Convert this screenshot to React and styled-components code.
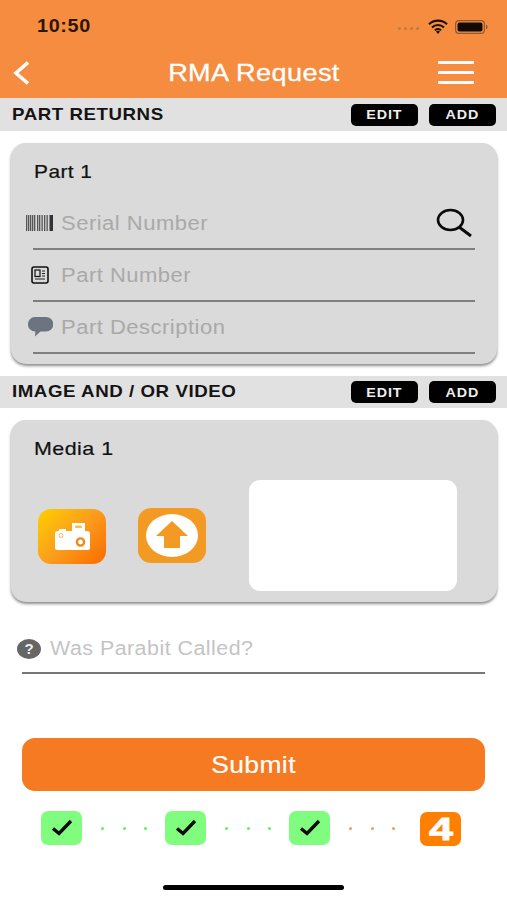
import React from 'react';
import styled, { createGlobalStyle } from 'styled-components';

const GlobalStyle = createGlobalStyle`
	html, body {
		margin: 0;
		padding: 0;
		background: #fff;
	}
	* {
		box-sizing: border-box;
	}
	body {
		font-family: "Liberation Sans", Arial, sans-serif;
	}
`;

const Screen = styled.div`
	width: 507px;
	height: 900px;
	display: flex;
	flex-direction: column;
	background: #fff;
	overflow: hidden;
`;

// the screenshot is stretched sideways, so the type is too
const Wide = styled.span`
	display: inline-block;
	white-space: nowrap;
	transform: scaleX(${props => props.$x || 1.1});
	transform-origin: ${props => props.$origin || 'left'} center;
`;

const Header = styled.header`
	height: 98px;
	background: #f68c40;
	display: flex;
	flex-direction: column;
`;

const StatusBar = styled.div`
	height: 53px;
	display: flex;
	align-items: center;
	justify-content: space-between;
	padding: 0 19px 0 37px;
`;

const Clock = styled.span`
	font-size: 18px;
	font-weight: 700;
	letter-spacing: 0.6px;
	color: #2a1606;
`;

const StatusIcons = styled.div`
	display: flex;
	align-items: center;
	gap: 7px;
`;

const Signal = styled.div`
	display: flex;
	gap: 3px;
	margin: 4px 2px 0 0;
`;

const SignalDot = styled.i`
	width: 3px;
	height: 3px;
	border-radius: 50%;
	background: #c07a3e;
`;

const NavBar = styled.div`
	flex: 1;
	display: grid;
	grid-template-columns: 60px 1fr 60px;
	align-items: center;
	padding: 0 33px 6px 12px;
`;

const Title = styled.h1`
	margin: 0;
	text-align: center;
	font-size: 24px;
	font-weight: 400;
	letter-spacing: 0.35px;
	color: #fff;
	-webkit-text-stroke: 0.3px #fff;
	padding-left: 22px;
`;

const Burger = styled.div`
	justify-self: end;
	width: 36px;
	display: flex;
	flex-direction: column;
	gap: 7px;
`;

const BurgerLine = styled.i`
	height: 3px;
	background: #fff;
	border-radius: 1px;
`;

const SectionBar = styled.div`
	height: ${props => props.$height}px;
	background: #e1e1e1;
	display: flex;
	align-items: center;
	justify-content: space-between;
	padding: 0 11px 0 12px;
`;

const SectionTitle = styled.h2`
	margin: 0;
	font-size: 17px;
	font-weight: 700;
	letter-spacing: 0.5px;
	color: #141414;
`;

const Actions = styled.div`
	display: flex;
	gap: 11px;
`;

const ActionButton = styled.button`
	width: 67px;
	height: 22px;
	padding: 0;
	border: none;
	border-radius: 5px;
	background: #000;
	color: #eee;
	font-family: inherit;
	font-size: 13px;
	font-weight: 700;
	letter-spacing: 0.8px;
`;

const Card = styled.section`
	height: ${props => props.$height}px;
	margin: 12px 10px 12px 11px;
	background: #dadada;
	border-radius: 15px;
	box-shadow: 0 2px 3px rgba(0, 0, 0, 0.45);
	display: flex;
	flex-direction: column;
`;

const CardTitle = styled.h3`
	margin: 0;
	height: ${props => props.$height}px;
	padding: 18px 0 0 23px;
	font-size: 19px;
	line-height: 22px;
	font-weight: 400;
	letter-spacing: 0.4px;
	color: #111;
	-webkit-text-stroke: 0.2px #111;
`;

const FieldRow = styled.div`
	height: 50px;
	display: flex;
	align-items: center;
	padding: 0 24px 0 15px;
`;

const FieldIcon = styled.div`
	width: 28px;
	height: 24px;
	margin-right: 7px;
	flex: none;
	display: flex;
	align-items: center;
	justify-content: center;
`;

const Placeholder = styled.span`
	flex: 1;
	font-size: 20px;
	letter-spacing: 0.45px;
	color: ${props => props.$color || '#a9a9a9'};
`;

const Rule = styled.div`
	height: 2px;
	margin: 0 22px;
	background: #7f7f7f;
`;

const MediaRow = styled.div`
	display: flex;
	align-items: flex-start;
	padding: 15px 0 0 27px;
`;

const MediaButton = styled.div`
	width: 68px;
	height: 55px;
	margin-top: ${props => props.$top}px;
	margin-right: ${props => props.$right}px;
	border-radius: 13px;
	background: ${props => props.$bg};
	display: flex;
	align-items: center;
	justify-content: center;
	flex: none;
`;

const Preview = styled.div`
	width: 208px;
	height: 111px;
	background: #fff;
	border-radius: 11px;
`;

const QuestionRow = styled.div`
	height: 47px;
	margin-top: 11px;
	display: flex;
	align-items: center;
	padding: 0 22px 0 17px;
	gap: 9px;
`;

const QuestionRule = styled.div`
	height: 2px;
	margin: 0 22px;
	background: #777;
`;

const SubmitButton = styled.button`
	height: 53px;
	margin: 64px 22px 0;
	padding: 0;
	border: none;
	border-radius: 13px;
	background: #f57a22;
	color: #fff;
	font-family: inherit;
	font-size: 24px;
	letter-spacing: 0.4px;
	-webkit-text-stroke: 0.2px #fff;
`;

const Steps = styled.div`
	display: flex;
	align-items: center;
	padding-left: 41px;
	margin-top: 20px;
	height: 34px;
`;

const StepBox = styled.div`
	width: 41px;
	height: 34px;
	border-radius: 7px;
	flex: none;
	display: flex;
	align-items: center;
	justify-content: center;
	background: ${props => (props.$current ? '#ff7f00' : '#80fd7f')};
	color: #fff;
	font-size: 32px;
	font-weight: 700;
	-webkit-text-stroke: 0.8px #fff;
	position: relative;
	top: ${props => (props.$current ? 1 : 0)}px;
`;

const Connector = styled.div`
	width: ${props => props.$width}px;
	flex: none;
	display: flex;
	gap: 18.5px;
	padding-left: 19px;
`;

const Dot = styled.i`
	width: 3px;
	height: 3px;
	border-radius: 50%;
	background: ${props => props.$color};
`;

const HomeIndicator = styled.div`
	width: 181px;
	height: 5px;
	margin: 40px auto 0;
	border-radius: 3px;
	background: #000;
`;

const Wifi = () => (
	<svg width="20" height="15" viewBox="0 0 20 15">
		<path d="M1 5.2a13 13 0 0 1 18 0M4 8.4a8.8 8.8 0 0 1 12 0M6.9 11.3a4.5 4.5 0 0 1 6.2 0" fill="none" stroke="#1c0f04" strokeWidth="2.1" />
		<path d="M10 15l-2-2.4a3 3 0 0 1 4 0z" fill="#1c0f04" />
	</svg>
);

const Battery = () => (
	<svg width="33" height="14" viewBox="0 0 33 14">
		<rect x="0.6" y="0.6" width="28.8" height="12.8" rx="3.5" fill="none" stroke="#8a5a34" strokeWidth="1.2" />
		<rect x="2.5" y="2.5" width="25" height="9" rx="2" fill="#120a03" />
		<path d="M31 4.8c1 .3 1.6 1.1 1.6 2.2s-.6 1.9-1.6 2.2z" fill="#8a5a34" />
	</svg>
);

const BackIcon = () => (
	<svg width="20" height="26" viewBox="0 0 20 26">
		<path d="M16 2.5L4 13l12 10.5" fill="none" stroke="#fff" strokeWidth="3.6" />
	</svg>
);

const BarcodeIcon = () => (
	<svg width="28" height="16" viewBox="0 0 28 16" fill="#555">
		{[0, 2, 4, 6, 8, 11, 13, 15.5, 18, 20.5].map(x => (
			<rect key={x} x={x} y="0" width="1.3" height="16" />
		))}
		<rect x="23.5" y="0" width="3.5" height="16" fill="#333" />
	</svg>
);

const SearchIcon = () => (
	<svg width="37" height="30" viewBox="0 0 37 30">
		<ellipse cx="14.5" cy="12" rx="12.5" ry="10" fill="none" stroke="#0a0a0a" strokeWidth="2.6" />
		<path d="M23 19l12 9" stroke="#0a0a0a" strokeWidth="3" />
	</svg>
);

const PartIcon = () => (
	<svg width="18" height="18" viewBox="0 0 18 18">
		<rect x="1" y="1" width="16" height="16" rx="2" fill="none" stroke="#111" strokeWidth="1.6" />
		<rect x="4" y="4" width="5" height="6.5" fill="none" stroke="#111" strokeWidth="1.2" />
		<path d="M11 5h3M11 7.5h3M11 10h3M4 13h10" stroke="#222" strokeWidth="1.1" />
	</svg>
);

const BubbleIcon = () => (
	<svg width="25" height="20" viewBox="0 0 25 20">
		<path d="M7 0h11a7 7 0 0 1 0 14.5h-5.5L7 19.5l.4-5A7.2 7.2 0 0 1 7 0z" fill="#6c757f" />
	</svg>
);

const CameraIcon = () => (
	<svg width="35" height="27" viewBox="0 0 35 27">
		<path d="M17 0h13v8h2a3 3 0 0 1 3 3v13.5a2.5 2.5 0 0 1-2.5 2.5h-30A2.5 2.5 0 0 1 0 24.5V11a3 3 0 0 1 3-3h1V6h7v2h6z" fill="#fff" />
		<rect x="20" y="2.5" width="7" height="2.5" rx="1" fill="#f9c04a" />
		<circle cx="6" cy="12.5" r="2" fill="none" stroke="#f9b45a" strokeWidth="1" />
		<circle cx="25.5" cy="19" r="3.6" fill="none" stroke="#f08a1c" strokeWidth="2.4" />
	</svg>
);

const UploadIcon = () => (
	<svg width="52" height="43" viewBox="0 0 52 43">
		<ellipse cx="26" cy="21.5" rx="26" ry="21.5" fill="#fff" />
		<path d="M26 7L42 22H34V34H18V22H10z" fill="#f39a24" />
	</svg>
);

const HelpIcon = () => (
	<svg width="24" height="20" viewBox="0 0 24 20">
		<ellipse cx="12" cy="10" rx="12" ry="10" fill="#666" />
		<text x="12" y="15" textAnchor="middle" fontFamily="Liberation Sans, sans-serif" fontSize="15" fontWeight="700" fill="#eee">?</text>
	</svg>
);

const CheckIcon = () => (
	<svg width="22" height="18" viewBox="0 0 22 18">
		<path d="M2 9.5l6 5L20 2" fill="none" stroke="#0a0a0a" strokeWidth="3.3" />
	</svg>
);

const Section = ({ title, height }) => (
	<SectionBar $height={height}>
		<SectionTitle><Wide>{title}</Wide></SectionTitle>
		<Actions>
			<ActionButton><Wide $origin="center">EDIT</Wide></ActionButton>
			<ActionButton><Wide $origin="center">ADD</Wide></ActionButton>
		</Actions>
	</SectionBar>
);

const Field = ({ icon, label, action }) => (
	<>
		<FieldRow>
			<FieldIcon>{icon}</FieldIcon>
			<Placeholder><Wide>{label}</Wide></Placeholder>
			{action}
		</FieldRow>
		<Rule />
	</>
);

const Connect = ({ color, width = 83 }) => (
	<Connector $width={width}>
		<Dot $color={color} />
		<Dot $color={color} />
		<Dot $color={color} />
	</Connector>
);

export default function App() {
	return (
		<Screen>
			<GlobalStyle />
			<Header>
				<StatusBar>
					<Clock><Wide>10:50</Wide></Clock>
					<StatusIcons>
						<Signal>
							<SignalDot />
							<SignalDot />
							<SignalDot />
							<SignalDot />
						</Signal>
						<Wifi />
						<Battery />
					</StatusIcons>
				</StatusBar>
				<NavBar>
					<BackIcon />
					<Title><Wide $x={1.13} $origin="center">RMA Request</Wide></Title>
					<Burger>
						<BurgerLine />
						<BurgerLine />
						<BurgerLine />
					</Burger>
				</NavBar>
			</Header>

			<Section title="PART RETURNS" height={33} />
			<Card $height={221}>
				<CardTitle $height={55}><Wide>Part 1</Wide></CardTitle>
				<Field icon={<BarcodeIcon />} label="Serial Number" action={<SearchIcon />} />
				<Field icon={<PartIcon />} label="Part Number" />
				<Field icon={<BubbleIcon />} label="Part Description" />
			</Card>

			<Section title="IMAGE AND / OR VIDEO" height={32} />
			<Card $height={182}>
				<CardTitle $height={45}><Wide $x={1.13}>Media 1</Wide></CardTitle>
				<MediaRow>
					<MediaButton $top={29} $right={32} $bg="linear-gradient(135deg, #fdd000 0%, #fb9d1c 50%, #fb6a00 100%)">
						<CameraIcon />
					</MediaButton>
					<MediaButton $top={28} $right={43} $bg="#f39a24">
						<UploadIcon />
					</MediaButton>
					<Preview />
				</MediaRow>
			</Card>

			<QuestionRow>
				<HelpIcon />
				<Placeholder $color="#c4c4c4"><Wide $x={1.07}>Was Parabit Called?</Wide></Placeholder>
			</QuestionRow>
			<QuestionRule />

			<SubmitButton><Wide $origin="center">Submit</Wide></SubmitButton>

			<Steps>
				<StepBox><CheckIcon /></StepBox>
				<Connect color="#5cf25c" />
				<StepBox><CheckIcon /></StepBox>
				<Connect color="#5cf25c" />
				<StepBox><CheckIcon /></StepBox>
				<Connect color="#f79a55" width={90} />
				<StepBox $current><Wide $x={1.35} $origin="center">4</Wide></StepBox>
			</Steps>

			<HomeIndicator />
		</Screen>
	);
}
